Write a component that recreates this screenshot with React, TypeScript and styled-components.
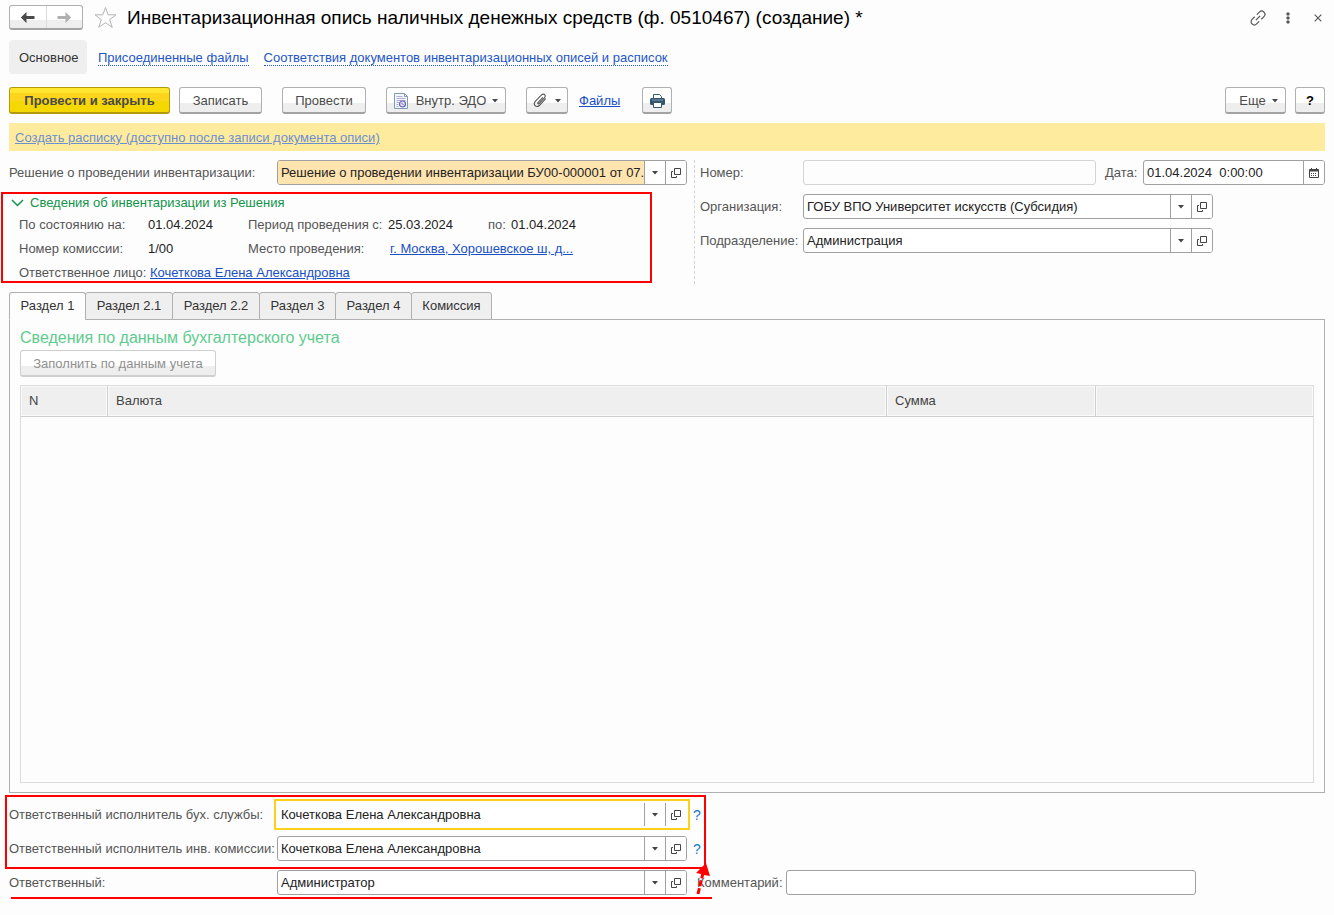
import React, { useState } from 'react';
import styled, { createGlobalStyle, css } from 'styled-components';

const GlobalStyle = createGlobalStyle`
  * { box-sizing: border-box; }
  body {
    margin: 0;
    background: #fdfdfd;
    color: #333;
    font-family: "Liberation Sans", Arial, sans-serif;
    font-size: 13px;
    line-height: 16px;
  }
  button, input { font: inherit; color: inherit; }
  button { padding: 0; margin: 0; cursor: pointer; }
`;

const Page = styled.main`
  display: flex;
  flex-direction: column;
  min-height: 100vh;
  padding: 5px 9px 20px;
`;

const TitleBar = styled.header`
  display: flex;
  align-items: center;
  height: 25px;
`;

const raised = css`
  border: 1px solid #b0b0b0;
  border-bottom: 2px solid #a3a3a3;
  border-radius: 3px;
  background: linear-gradient(#fff 0 62%, #eeeeee 62% 100%);
`;

const HistoryGroup = styled.div`
  ${raised}
  display: flex;
  width: 74px;
  height: 25px;
`;

const HistoryButton = styled.button`
  display: flex;
  flex: 1;
  align-items: center;
  justify-content: center;
  border: 0;
  background: none;
  color: #4a4a4a;
  & + & { border-left: 1px solid #dcdcdc; }
  &:disabled { color: #b0b0b0; }
`;

const IconButton = styled.button`
  display: flex;
  align-items: center;
  justify-content: center;
  width: 24px;
  height: 24px;
  border: 0;
  background: none;
  color: #555;
`;

const StarButton = styled(IconButton)`
  margin: 0 10px;
`;

const Title = styled.h1`
  flex: 1;
  margin: 0;
  color: #000;
  font-size: 19px;
  font-weight: 400;
  line-height: 24px;
  white-space: nowrap;
`;

const WindowTools = styled.div`
  display: flex;
  gap: 6px;
  margin-right: -5px;
`;

const SectionNav = styled.nav`
  display: flex;
  align-items: center;
  gap: 15px;
  height: 34px;
  margin-top: 10px;
`;

const CurrentSection = styled.span`
  margin-right: -4px;
  padding: 10px 10px 8px;
  width: 78px;
  border-radius: 4px;
  background: #efefef;
  white-space: nowrap;
`;

const SectionLink = styled.a`
  margin-top: 2px;
  border-bottom: 1px dotted #2456c5;
  color: #2456c5;
  line-height: 14px;
  text-decoration: none;
  white-space: nowrap;
`;

const Toolbar = styled.div`
  display: flex;
  align-items: center;
  margin-top: 13px;
`;

const Button = styled.button<{ $width: number; $primary?: boolean }>`
  ${raised}
  display: flex;
  align-items: center;
  justify-content: center;
  width: ${p => p.$width}px;
  height: 27px;
  padding-top: 1px;
  color: #4a4a4a;
  white-space: nowrap;
  ${p => p.$primary && css`
    border-color: #b39a0c;
    background: linear-gradient(#ffe72f 0 20%, #fcd51c 22% 55%, #f5d800 57% 100%);
    font-weight: 700;
  `}
  &:disabled {
    border-color: #cfcfcf;
    color: #909090;
  }
`;

const HelpButton = styled(Button)`
  color: #000;
  font-weight: 700;
`;

const Gap = styled.span<{ $size: number }>`
  flex: 0 0 ${p => p.$size}px;
`;

const Spacer = styled.span`
  flex: 1;
`;

const Link = styled.a`
  color: #1a50c4;
  text-decoration: underline;
  white-space: nowrap;
`;

const Notice = styled.div`
  margin-top: 9px;
  padding: 7px 6px 5px;
  height: 28px;
  background: #ffeb9e;
  a { color: #6c8fd0; }
`;

const Form = styled.div`
  display: flex;
  margin-top: 9px;
`;

const LeftColumn = styled.div`
  flex: 0 0 686px;
  padding-right: 7px;
  border-right: 1px dashed #d4d4d4;
`;

const RightColumn = styled.div`
  display: flex;
  flex: 1;
  flex-direction: column;
  gap: 9px;
  min-width: 0;
  padding-left: 5px;
`;

const Row = styled.div`
  display: flex;
  align-items: center;
`;

const Label = styled.label<{ $width?: number }>`
  flex: none;
  width: ${p => (p.$width ? `${p.$width}px` : 'auto')};
  color: #555;
  white-space: nowrap;
`;

const FieldBox = styled.div<{ $grow?: boolean; $tone?: 'filled' | 'muted' | 'focus'; $width?: number }>`
  display: flex;
  flex: ${p => (p.$grow ? '1 1 0' : `0 1 ${p.$width ?? 410}px`)};
  height: 25px;
  min-width: 0;
  overflow: hidden;
  border: 1px solid #a0a0a0;
  border-radius: 3px;
  background: #fff;
  ${p => p.$tone === 'muted' && css`border-color: #d4d4d4; background: #fdfdfd;`}
  ${p => p.$tone === 'filled' && css`input { background: #ffe4b0; }`}
  ${p => p.$tone === 'focus' && css`
    border-color: #fff;
    border-radius: 0;
    outline: 2px solid #fbd11c;
    outline-offset: 1px;
  `}
`;

const TextInput = styled.input`
  flex: 1;
  min-width: 0;
  padding: 0 0 0 3px;
  border: 0;
  outline: 0;
  background: transparent;
  color: #222;
`;

const FieldButton = styled.button`
  display: flex;
  flex: 0 0 21px;
  align-items: center;
  justify-content: center;
  border: 0;
  border-left: 1px solid #a0a0a0;
  background: #fff;
  color: #444;
`;

const Details = styled.section`
  position: relative;
  margin-top: 9px;
  padding-left: 10px;
  height: 90px;
`;

const DetailsToggle = styled.button`
  display: flex;
  align-items: center;
  gap: 6px;
  margin-left: -8px;
  border: 0;
  background: none;
  color: #12934a;
  line-height: 18px;
`;

const DetailsGrid = styled.div`
  display: grid;
  grid-template-columns: 129px 100px 140px 100px 23px auto;
  grid-auto-rows: 24px;
  margin-top: 1px;
  align-items: center;
  color: #222;
  white-space: nowrap;
`;

const Caption = styled.span`
  color: #555;
`;

const WideCell = styled.span<{ $from: number }>`
  grid-column: ${p => p.$from} / -1;
  padding-left: 2px;
`;

const DetailsFrame = styled.div`
  position: absolute;
  inset: -2px 35px 1px -8px;
  border: 2px solid #ff0000;
  pointer-events: none;
`;

const TabList = styled.div`
  display: flex;
  margin-top: 8px;
`;

const Tab = styled.button<{ $width: number; $active: boolean }>`
  position: relative;
  width: ${p => p.$width}px;
  height: 28px;
  margin-right: -1px;
  margin-bottom: -1px;
  border: 1px solid #b0b0b0;
  border-radius: 3px 3px 0 0;
  background: #efefef;
  color: #333;
  white-space: nowrap;
  ${p => p.$active && css`border-bottom-color: #fdfdfd; background: #fdfdfd;`}
`;

const Panel = styled.section`
  display: flex;
  flex: 1;
  flex-direction: column;
  align-items: flex-start;
  min-height: 300px;
  padding: 8px 10px 9px;
  border: 1px solid #b0b0b0;
`;

const PanelTitle = styled.h2`
  margin: 0 0 2px;
  color: #5fcb8e;
  font-size: 16px;
  font-weight: 400;
  line-height: 20px;
`;

const TableFrame = styled.div`
  flex: 1;
  align-self: stretch;
  margin-top: 8px;
  border: 1px solid #dcdcdc;
`;

const Table = styled.table`
  width: 100%;
  table-layout: fixed;
  border-collapse: separate;
  border-spacing: 0;
  th {
    height: 31px;
    padding: 0 8px;
    border-right: 1px solid #cfcfcf;
    border-bottom: 1px solid #cfcfcf;
    background: #efefef;
    box-shadow: inset 0 0 0 1px #fafafa;
    color: #444;
    font-weight: 400;
    text-align: left;
  }
  th:last-child { border-right: 0; }
`;

const Footer = styled.footer`
  position: relative;
  display: flex;
  flex-direction: column;
  gap: 9px;
  margin-top: 9px;
`;

const HintButton = styled.button`
  margin-left: 6px;
  border: 0;
  background: none;
  color: #1878c8;
  font-size: 14px;
`;

const Annotation = styled.svg`
  position: absolute;
  top: -9px;
  left: -9px;
  pointer-events: none;
`;

const Caret = () => (
  <svg width="6" height="4" viewBox="0 0 6 4" aria-hidden="true">
    <path d="M0 0h6L3 3.5z" fill="currentColor" />
  </svg>
);

const OpenIcon = () => (
  <svg width="10" height="10" viewBox="0 0 10 10" fill="none" stroke="currentColor" aria-hidden="true">
    <path d="M3.5.5h6v6h-6z" />
    <path d="M2 3.500H.5v6h5V8" />
  </svg>
);

const Arrow = ({ flip }: { flip?: boolean }) => (
  <svg width="15" height="11" viewBox="0 0 15 11" aria-hidden="true">
    <g transform={flip ? 'matrix(-1 0 0 1 15 0)' : undefined} fill="currentColor">
      <path d="M.8 5.500L6.500 0v4H14.500v3H6.500v4z" />
    </g>
  </svg>
);

const StarIcon = () => (
  <svg width="24" height="23" viewBox="0 0 24 23" fill="none" stroke="#b4b4b8" aria-hidden="true">
    <path d="M12.500 1.500l2.700 7.300h7.800l-6.300 4.800 2.500 7.700-6.700-4.600-6.700 4.600 2.500-7.700L2 8.800h7.800z" />
  </svg>
);

const LinkIcon = () => (
  <svg width="18" height="18" viewBox="0 0 18 18" fill="none" stroke="currentColor" strokeWidth="1.2" aria-hidden="true">
    <g transform="rotate(-45 9 9)">
      <path d="M7.500 5.800H3.800a3.200 3.200 0 0 0 0 6.400h3.700M10.500 5.800h3.700a3.200 3.200 0 0 1 0 6.400h-3.700M6 9h6" />
    </g>
  </svg>
);

const DotsIcon = () => (
  <svg width="4" height="12" viewBox="0 0 4 12" fill="currentColor" aria-hidden="true">
    <rect x=".5" y=".5" width="3" height="3" rx=".8" />
    <rect x=".5" y="4.500" width="3" height="3" rx=".8" />
    <rect x=".5" y="8.500" width="3" height="3" rx=".8" />
  </svg>
);

const CloseIcon = () => (
  <svg width="8" height="8" viewBox="0 0 8 8" fill="none" stroke="currentColor" strokeWidth="1.100" aria-hidden="true">
    <path d="M.7.7l6.600 6.600M7.300.7L.7 7.300" />
  </svg>
);

const DocumentIcon = () => (
  <svg width="14" height="16" viewBox="0 0 14 16" fill="none" aria-hidden="true">
    <path d="M.5.500h10l3 3v12H.5z" fill="#f2f7fc" stroke="#7d9db5" />
    <path d="M10.500.500v3h3" stroke="#7d9db5" />
    <path d="M2.500 3.500h6M2.500 5.500h9M2.500 7.500h9M2.500 9.500h3M2.500 11.500h2M2.500 13.500h2" stroke="#b3aad8" />
    <circle cx="8.500" cy="11" r="3" fill="#e3e1f7" stroke="#6a60b5" strokeWidth="1.200" />
    <path d="M7.300 9.800l2.400 2.400" stroke="#6a60b5" />
  </svg>
);

const ClipIcon = () => (
  <svg width="14" height="15" viewBox="0 0 14 15" fill="none" stroke="#555" strokeWidth="1.100" strokeLinecap="round" aria-hidden="true">
    <path d="M9.600 4.600L5 9.600c-.7.9.3 1.700 1.100.9l5.300-5.700c2-2.300-.7-5-2.900-2.900L2.500 8.200c-3 3.300.6 7.300 3.800 4.300l6.200-6.700" />
  </svg>
);

const PrinterIcon = () => (
  <svg width="15" height="14" viewBox="0 0 15 14" aria-hidden="true">
    <path d="M3.500 5V.500h6l2 2V5" fill="#fff" stroke="#35566f" />
    <rect x="0" y="4" width="15" height="7" rx="1.500" fill="#35566f" />
    <path d="M2 6h11" stroke="#7f9db3" />
    <path d="M3.500 8.500h8v5h-8z" fill="#fff" stroke="#35566f" />
  </svg>
);

const CalendarIcon = () => (
  <svg width="10" height="10" viewBox="0 0 10 10" fill="none" stroke="currentColor" aria-hidden="true">
    <path d="M.5 1.500h9v8h-9zM2.500 0v2M7.500 0v2" />
    <path d="M1 2.500h8" strokeWidth="2" />
    <path d="M2 5.500h6M2 7.500h6" strokeDasharray="1 1" />
  </svg>
);

const Chevron = () => (
  <svg width="13" height="8" viewBox="0 0 13 8" fill="none" stroke="currentColor" strokeWidth="1.500" aria-hidden="true">
    <path d="M1 1l5.500 5.500L12 1" />
  </svg>
);

type FieldProps = {
  id: string;
  value: string;
  tone?: 'filled' | 'focus';
};

function ReferenceField({ id, value, tone }: FieldProps) {
  return (
    <FieldBox $tone={tone}>
      <TextInput id={id} defaultValue={value} />
      <FieldButton type="button" aria-label="Выбрать"><Caret /></FieldButton>
      <FieldButton type="button" aria-label="Открыть"><OpenIcon /></FieldButton>
    </FieldBox>
  );
}

const tabs = [
  { name: 'Раздел 1', width: 77 },
  { name: 'Раздел 2.1', width: 88 },
  { name: 'Раздел 2.2', width: 88 },
  { name: 'Раздел 3', width: 77 },
  { name: 'Раздел 4', width: 77 },
  { name: 'Комиссия', width: 81 },
];

export default function App() {
  const [active, setActive] = useState(0);
  return (
    <>
      <GlobalStyle />
      <Page>
        <TitleBar>
          <HistoryGroup>
            <HistoryButton type="button" aria-label="Назад"><Arrow /></HistoryButton>
            <HistoryButton type="button" aria-label="Вперед" disabled><Arrow flip /></HistoryButton>
          </HistoryGroup>
          <StarButton type="button" aria-label="В избранное"><StarIcon /></StarButton>
          <Title>Инвентаризационная опись наличных денежных средств (ф. 0510467) (создание) *</Title>
          <WindowTools>
            <IconButton type="button" aria-label="Ссылка"><LinkIcon /></IconButton>
            <IconButton type="button" aria-label="Меню"><DotsIcon /></IconButton>
            <IconButton type="button" aria-label="Закрыть"><CloseIcon /></IconButton>
          </WindowTools>
        </TitleBar>

        <SectionNav>
          <CurrentSection>Основное</CurrentSection>
          <SectionLink href="#files">Присоединенные файлы</SectionLink>
          <SectionLink href="#matches">Соответствия документов инвентаризационных описей и расписок</SectionLink>
        </SectionNav>

        <Toolbar>
          <Button type="button" $width={161} $primary>Провести и закрыть</Button>
          <Gap $size={9} />
          <Button type="button" $width={83}>Записать</Button>
          <Gap $size={20} />
          <Button type="button" $width={84}>Провести</Button>
          <Gap $size={20} />
          <Button type="button" $width={120}>
            <DocumentIcon /><Gap $size={8} />Внутр. ЭДО<Gap $size={6} /><Caret />
          </Button>
          <Gap $size={20} />
          <Button type="button" $width={42} aria-label="Прикрепить">
            <ClipIcon /><Gap $size={8} /><Caret />
          </Button>
          <Gap $size={11} />
          <Link href="#attachments">Файлы</Link>
          <Gap $size={22} />
          <Button type="button" $width={30} aria-label="Печать"><PrinterIcon /></Button>
          <Spacer />
          <Button type="button" $width={61}><Gap $size={6} />Еще<Gap $size={6} /><Caret /></Button>
          <Gap $size={9} />
          <HelpButton type="button" $width={30}>?</HelpButton>
        </Toolbar>

        <Notice><Link href="#receipt">Создать расписку (доступно после записи документа описи)</Link></Notice>

        <Form>
          <LeftColumn>
            <Row>
              <Label htmlFor="decision" $width={268}>Решение о проведении инвентаризации:</Label>
              <ReferenceField id="decision" tone="filled" value="Решение о проведении инвентаризации БУ00-000001 от 07.0" />
            </Row>
            <Details>
              <DetailsToggle type="button" aria-expanded="true">
                <Chevron />Сведения об инвентаризации из Решения
              </DetailsToggle>
              <DetailsGrid>
                <Caption>По состоянию на:</Caption>
                <span>01.04.2024</span>
                <Caption>Период проведения с:</Caption>
                <span>25.03.2024</span>
                <Caption>по:</Caption>
                <span>01.04.2024</span>
                <Caption>Номер комиссии:</Caption>
                <span>1/00</span>
                <Caption>Место проведения:</Caption>
                <WideCell $from={4}><Link href="#place">г. Москва, Хорошевское ш, д...</Link></WideCell>
                <Caption>Ответственное лицо:</Caption>
                <WideCell $from={2}><Link href="#person">Кочеткова Елена Александровна</Link></WideCell>
              </DetailsGrid>
              <DetailsFrame />
            </Details>
          </LeftColumn>

          <RightColumn>
            <Row>
              <Label htmlFor="number" $width={103}>Номер:</Label>
              <FieldBox $grow $tone="muted"><TextInput id="number" /></FieldBox>
              <Gap $size={9} />
              <Label htmlFor="date" $width={38}>Дата:</Label>
              <FieldBox $width={182}>
                <TextInput id="date" defaultValue="01.04.2024  0:00:00" />
                <FieldButton type="button" aria-label="Календарь"><CalendarIcon /></FieldButton>
              </FieldBox>
            </Row>
            <Row>
              <Label htmlFor="organization" $width={103}>Организация:</Label>
              <ReferenceField id="organization" value="ГОБУ ВПО Университет искусств (Субсидия)" />
            </Row>
            <Row>
              <Label htmlFor="department" $width={103}>Подразделение:</Label>
              <ReferenceField id="department" value="Администрация" />
            </Row>
          </RightColumn>
        </Form>

        <TabList role="tablist">
          {tabs.map((tab, i) => (
            <Tab
              key={tab.name}
              type="button"
              role="tab"
              aria-selected={i === active}
              $active={i === active}
              $width={tab.width}
              onClick={() => setActive(i)}
            >
              {tab.name}
            </Tab>
          ))}
        </TabList>
        <Panel role="tabpanel">
          <PanelTitle>Сведения по данным бухгалтерского учета</PanelTitle>
          <Button type="button" $width={196} disabled>Заполнить по данным учета</Button>
          <TableFrame>
            <Table>
              <colgroup>
                <col style={{ width: 87 }} />
                <col />
                <col style={{ width: 209 }} />
                <col style={{ width: 217 }} />
              </colgroup>
              <thead>
                <tr><th>N</th><th>Валюта</th><th>Сумма</th><th aria-label="Прочее" /></tr>
              </thead>
              <tbody />
            </Table>
          </TableFrame>
        </Panel>

        <Footer>
          <Row>
            <Label htmlFor="accounting" $width={268}>Ответственный исполнитель бух. службы:</Label>
            <ReferenceField id="accounting" tone="focus" value="Кочеткова Елена Александровна" />
            <HintButton type="button">?</HintButton>
          </Row>
          <Row>
            <Label htmlFor="commission" $width={268}>Ответственный исполнитель инв. комиссии:</Label>
            <ReferenceField id="commission" value="Кочеткова Елена Александровна" />
            <HintButton type="button">?</HintButton>
          </Row>
          <Row>
            <Label htmlFor="responsible" $width={268}>Ответственный:</Label>
            <ReferenceField id="responsible" value="Администратор" />
            <Gap $size={10} />
            <Label htmlFor="comment" $width={89}>Комментарий:</Label>
            <FieldBox><TextInput id="comment" /></FieldBox>
          </Row>
          <Annotation width="720" height="110" viewBox="0 0 720 110" fill="none" stroke="#ff0000" strokeWidth="2" aria-hidden="true">
            <path d="M6 3h699v72H6zM11 105h701" />
            <path d="M698 101l5-21" strokeWidth="3" strokeDasharray="6 2" />
            <path d="M706 70l-10 10 5 1 1 3 2-2 6 1z" fill="#ff0000" stroke="none" />
          </Annotation>
        </Footer>
      </Page>
    </>
  );
}
